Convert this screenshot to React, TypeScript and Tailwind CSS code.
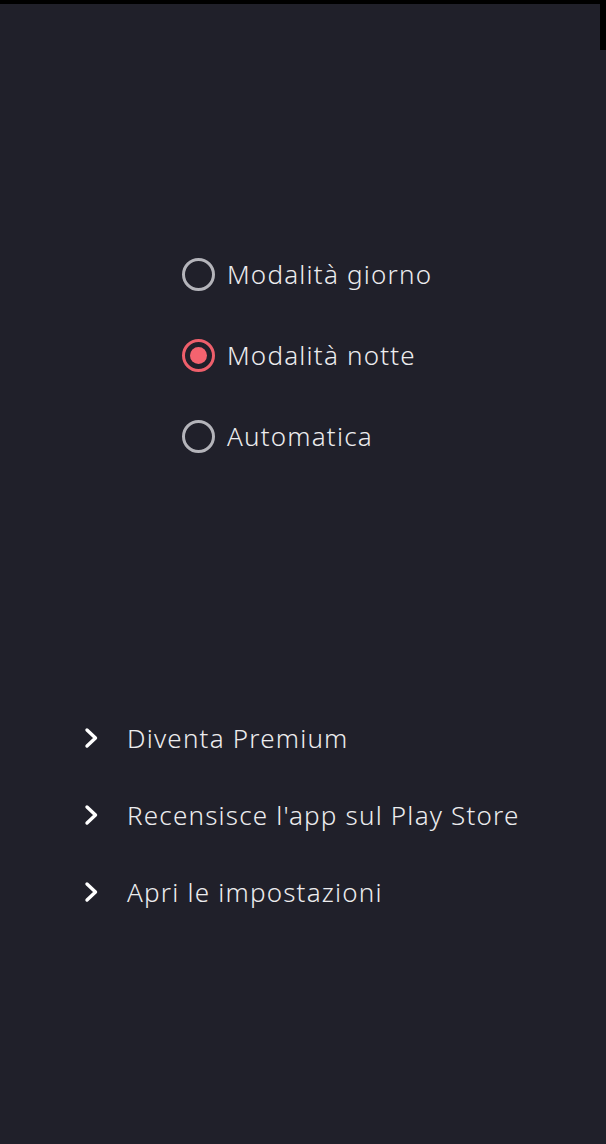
import { useState } from 'react'

function Radio({ checked }: { checked: boolean }) {
  return checked ? (
    <span className="flex h-[33px] w-[33px] items-center justify-center rounded-full border-[3px] border-[#ee5f6b]">
      <span className="h-[17px] w-[17px] rounded-full bg-[#f4636f]" />
    </span>
  ) : (
    <span className="h-[33px] w-[33px] rounded-full border-[3px] border-[#b4b4ba]" />
  )
}

function Chevron() {
  return (
    <svg width="18" height="22" viewBox="0 0 18 22" fill="none">
      <path d="M4 3 L12.5 11 L4 19" stroke="#ffffff" strokeWidth="3.4" strokeLinecap="round" strokeLinejoin="round" />
    </svg>
  )
}

export default function App() {
  const [mode, setMode] = useState(1)
  const modes = ['Modalità giorno', 'Modalità notte', 'Automatica']
  const links = ['Diventa Premium', "Recensisce l'app sul Play Store", 'Apri le impostazioni']

  return (
    <div
      className="flex h-[1144px] w-[606px] flex-col bg-[#20202a] text-[#ececee]"
      style={{ fontFamily: '"Noto Sans", "Open Sans", sans-serif' }}
    >
      {/* status strip */}
      <div className="flex h-[4px] w-full bg-black" />
      <div className="relative">
        <div className="absolute right-0 top-0 h-[46px] w-[6px] bg-black" />
      </div>

      <div className="mt-[252px] flex flex-col gap-[45px] pl-[182px]">
        {modes.map((m, i) => (
          <button
            key={m}
            onClick={() => setMode(i)}
            className="flex h-[36px] items-center gap-[12px] text-left"
          >
            <Radio checked={mode === i} />
            <span className="text-[26px] font-light leading-none tracking-[1.2px]">{m}</span>
          </button>
        ))}
      </div>

      <div className="mt-[266px] flex flex-col gap-[41px] pl-[83px]">
        {links.map((l) => (
          <div key={l} className="flex h-[36px] items-center gap-[26px]">
            <Chevron />
            <span className="text-[26px] font-light leading-none tracking-[1.2px]">{l}</span>
          </div>
        ))}
      </div>
    </div>
  )
}
